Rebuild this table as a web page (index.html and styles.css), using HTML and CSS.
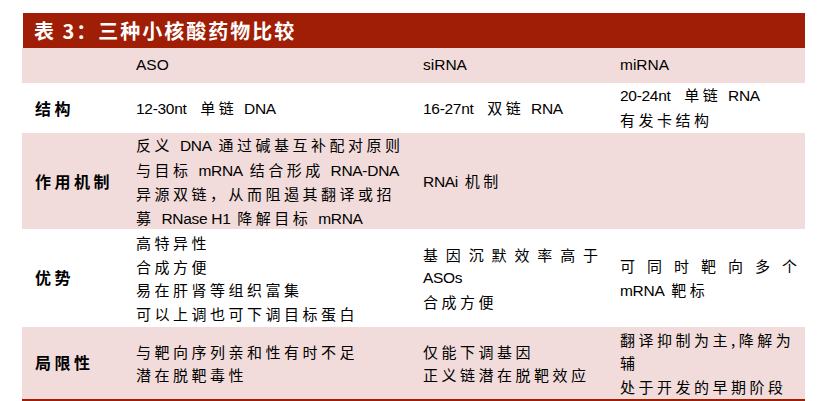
FILE: index.html
```html
<!DOCTYPE html>
<html lang="zh-CN">
<head>
<meta charset="utf-8">
<title>表 3：三种小核酸药物比较</title>
<link rel="stylesheet" href="styles.css">
</head>
<body>
<div class="table">
  <div class="title">表 3：三种小核酸药物比较</div>

  <div class="row head pink">
    <div class="cell label"></div>
    <div class="cell c2"><div class="t en">ASO</div></div>
    <div class="cell c3"><div class="t en">siRNA</div></div>
    <div class="cell c4"><div class="t en">miRNA</div></div>
  </div>

  <div class="row r1">
    <div class="cell label"><div class="t">结构</div></div>
    <div class="cell c2"><div class="t"><span class="en">12-30nt</span>&nbsp; 单链 <span class="en">DNA</span></div></div>
    <div class="cell c3"><div class="t"><span class="en">16-27nt</span>&nbsp; 双链 <span class="en">RNA</span></div></div>
    <div class="cell c4"><div class="t"><span class="en">20-24nt</span>&nbsp; 单链 <span class="en">RNA</span><br>有发卡结构</div></div>
  </div>

  <div class="row r2 pink">
    <div class="cell label"><div class="t">作用机制</div></div>
    <div class="cell c2"><div class="t">反义 <span class="en">DNA</span> 通过碱基互补配对原则<br>与目标 <span class="en">mRNA</span> 结合形成 <span class="en">RNA-DNA</span><br>异源双链，从而阻遏其翻译或招<br>募 <span class="en">RNase H1</span> 降解目标 <span class="en">mRNA</span></div></div>
    <div class="cell c3"><div class="t"><span class="en">RNAi</span> 机制</div></div>
    <div class="cell c4"></div>
  </div>

  <div class="row r3">
    <div class="cell label"><div class="t">优势</div></div>
    <div class="cell c2"><div class="t">高特异性<br>合成方便<br>易在肝肾等组织富集<br>可以上调也可下调目标蛋白</div></div>
    <div class="cell c3"><div class="t"><div class="just">基因沉默效率高于</div><div class="en">ASOs</div><div>合成方便</div></div></div>
    <div class="cell c4"><div class="t"><div class="just">可同时靶向多个</div><div><span class="en">mRNA</span> 靶标</div></div></div>
  </div>

  <div class="row r4 pink">
    <div class="cell label"><div class="t">局限性</div></div>
    <div class="cell c2"><div class="t">与靶向序列亲和性有时不足<br>潜在脱靶毒性</div></div>
    <div class="cell c3"><div class="t">仅能下调基因<br>正义链潜在脱靶效应</div></div>
    <div class="cell c4"><div class="t">翻译抑制为主,降解为<br>辅<br>处于开发的早期阶段</div></div>
  </div>
</div>
</body>
</html>
```

FILE: styles.css
```css
html, body {
  margin: 0;
  padding: 0;
  background: #ffffff;
}

body {
  padding: 13px 0 0 22px;
  font-family: "Liberation Sans", "Noto Sans CJK SC", sans-serif;
  color: #000000;
}

.table {
  width: 783px;
}

.title {
  height: 35px;
  line-height: 35px;
  background: #a11e06;
  color: #ffffff;
  font-family: "Noto Sans CJK SC", sans-serif;
  font-weight: 700;
  font-size: 20px;
  letter-spacing: 2px;
  padding-left: 11px;
  margin-left: 1px;
}

.row {
  display: grid;
  grid-template-columns: 114px 287px 197px 185px;
}

.pink {
  background: #f2dcdb;
}

.head { height: 35px; }
.r1 { height: 50px; }
.r2 { height: 96px; }
.r3 { height: 98px; }
.r4 {
  height: 72px;
  border-bottom: 2px solid #a11e06;
}

.cell {
  display: flex;
  flex-direction: column;
  justify-content: center;
  font-family: "Noto Sans CJK SC", sans-serif;
  font-size: 15px;
  line-height: 23.5px;
  letter-spacing: 3.5px;
  white-space: nowrap;
  color: #000000;
}

.head .cell {
  padding-bottom: 2px;
}

.r1 .cell {
  padding-bottom: 3px;
}

.r1 .c4 {
  padding-bottom: 6px;
}

.label {
  padding-left: 13px;
  font-weight: 700;
  font-size: 16px;
  letter-spacing: 3.5px;
}

.c2 { padding-right: 12px; }
.c3 { padding-right: 22px; }
.c4 { padding-right: 8px; }

.en {
  font-family: "Liberation Sans", sans-serif;
  font-size: 15.5px;
  letter-spacing: -0.3px;
}

.head .en {
  letter-spacing: 0;
}

.just {
  text-align: justify;
  text-align-last: justify;
  letter-spacing: 0;
  white-space: normal;
}
```
